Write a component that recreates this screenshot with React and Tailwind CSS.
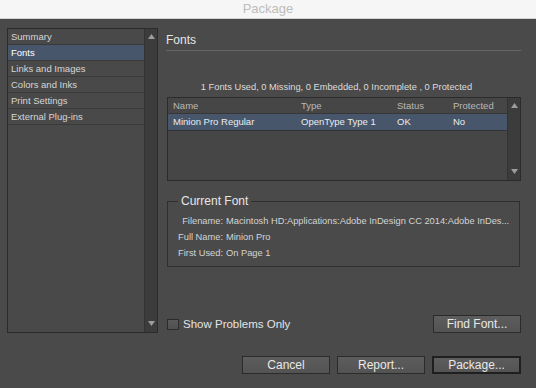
const sections = [
  'Summary',
  'Fonts',
  'Links and Images',
  'Colors and Inks',
  'Print Settings',
  'External Plug-ins',
]

function Arrow({ down }) {
  return (
    <svg width="7" height="5" viewBox="0 0 7 5" className="block">
      <polygon
        points={down ? '0,0 7,0 3.5,5' : '3.5,0 7,5 0,5'}
        fill="#9c9c9c"
      />
    </svg>
  )
}

function ScrollBar() {
  return (
    <div className="w-[13px] bg-[#3c3c3c] border-l border-[#333] flex flex-col items-center justify-between pt-[5px] pb-[6px]">
      <Arrow />
      <Arrow down />
    </div>
  )
}

function Button({ children, primary, w = 'w-[88px]' }) {
  return (
    <button
      type="button"
      className={
        'h-[18px] ' +
        w +
        ' bg-gradient-to-b from-[#5d5d5d] to-[#535353] text-[12px] leading-[14px] text-[#e8e8e8] ' +
        (primary ? 'border-2 border-[#1f1f1f]' : 'border border-[#2b2b2b]')
      }
    >
      {children}
    </button>
  )
}

export default function App() {
  return (
    <div className="w-[536px] h-[388px] bg-[#4a4a4a] flex flex-col font-['Liberation_Sans',Arial,sans-serif] overflow-hidden">
      <div className="h-[19px] bg-[#f6f6f6] border-b border-[#d4d4d4] text-center text-[13px] leading-[17px] text-[#bdbdbd]">
        Package
      </div>

      <div className="flex pl-[7px] pt-[9px]">
        {/* section list */}
        <div className="w-[151px] h-[305px] border border-[#2b2b2b] flex">
          <div className="flex-1 bg-[#494949]">
            {sections.map((s) => (
              <div
                key={s}
                className={
                  'h-[16px] border-b border-[#393939] pl-[3px] text-[9.5px] leading-[15px] ' +
                  (s === 'Fonts' ? 'bg-[#47566b] text-white' : 'text-[#d6d6d6]')
                }
              >
                {s}
              </div>
            ))}
          </div>
          <ScrollBar />
        </div>

        {/* right pane */}
        <div className="ml-[8px] w-[355px] flex flex-col">
          <div className="h-[23px] border-b border-[#666] pt-[5px] text-[12px] leading-[14px] text-[#e6e6e6]">
            Fonts
          </div>

          <div className="mt-[30px] h-[12px] pr-[14px] text-center text-[9.3px] leading-[12px] text-[#dcdcdc]">
            1 Fonts Used, 0 Missing, 0 Embedded, 0 Incomplete , 0 Protected
          </div>

          <div className="mt-[4px] ml-[1px] h-[84px] border border-[#2b2b2b] flex">
            <div className="flex-1 bg-[#464646] text-[9.5px]">
              <div className="h-[16px] border-b border-[#363636] grid grid-cols-[128px_96px_56px_1fr] pl-[5px] leading-[15px] text-[#b9b9b9]">
                <span>Name</span>
                <span>Type</span>
                <span>Status</span>
                <span>Protected</span>
              </div>
              <div className="h-[17px] bg-[#47566b] border-b border-[#333] grid grid-cols-[128px_96px_56px_1fr] pl-[5px] leading-[16px] text-[#ececec]">
                <span>Minion Pro Regular</span>
                <span>OpenType Type 1</span>
                <span>OK</span>
                <span>No</span>
              </div>
            </div>
            <ScrollBar />
          </div>

          <fieldset className="mt-[13px] ml-[1px] mr-[1px] border border-[#2f2f2f] pt-[5px] pb-[5px]">
            <legend className="ml-[10px] px-[3px] text-[12px] leading-[14px] text-[#e6e6e6]">
              Current Font
            </legend>
            {[
              ['Filename:', 'Macintosh HD:Applications:Adobe InDesign CC 2014:Adobe InDes...'],
              ['Full Name:', 'Minion Pro'],
              ['First Used:', 'On Page 1'],
            ].map(([k, v]) => (
              <div key={k} className="h-[16px] flex text-[9.3px] leading-[16px] text-[#d4d4d4]">
                <span className="w-[55px] text-right">{k}</span>
                <span className="ml-[3px] whitespace-nowrap">{v}</span>
              </div>
            ))}
          </fieldset>

          <div className="mt-[48px] flex items-center justify-between">
            <label className="ml-[1px] flex items-center gap-[4px] text-[11.5px] leading-[14px] text-[#e4e4e4]">
              <span className="w-[12px] h-[11px] border border-[#2b2b2b] bg-gradient-to-b from-[#5a5a5a] to-[#505050]" />
              Show Problems Only
            </label>
            <Button>Find Font...</Button>
          </div>

          <div className="mt-[23px] flex justify-end gap-[7px]">
            <Button>Cancel</Button>
            <Button>Report...</Button>
            <Button primary w="w-[89px]">Package...</Button>
          </div>
        </div>
      </div>
    </div>
  )
}
